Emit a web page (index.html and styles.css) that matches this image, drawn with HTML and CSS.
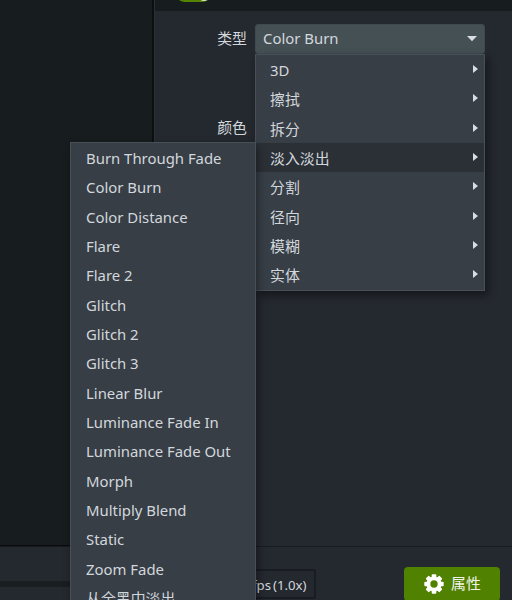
FILE: index.html
```html
<!doctype html>
<html lang="zh-CN">
  <head>
    <meta charset="utf-8">
    <meta name="viewport" content="width=device-width, initial-scale=1">
    <title>属性</title>
    <link rel="stylesheet" href="styles.css">
  </head>
  <body>
    <main class="editor">
      <section class="canvas"></section>
      <section class="panel">
        <header class="panel-header"><span class="toggle"><i></i></span></header>
        <div class="field">
          <label>类型</label>
          <div class="select">
            <span>Color Burn</span>
            <svg class="caret" width="10" height="6" viewBox="0 0 10 6"><path d="M0 0h10L5 5.2z"/></svg>
            <ul class="menu types">
              <li>3D</li>
              <li>擦拭</li>
              <li>拆分</li>
              <li class="active">淡入淡出
                <ul class="menu submenu">
                  <li>Burn Through Fade</li>
                  <li>Color Burn</li>
                  <li>Color Distance</li>
                  <li>Flare</li>
                  <li>Flare 2</li>
                  <li>Glitch</li>
                  <li>Glitch 2</li>
                  <li>Glitch 3</li>
                  <li>Linear Blur</li>
                  <li>Luminance Fade In</li>
                  <li>Luminance Fade Out</li>
                  <li>Morph</li>
                  <li>Multiply Blend</li>
                  <li>Static</li>
                  <li>Zoom Fade</li>
                  <li>从全黑中淡出</li>
                </ul>
              </li>
              <li>分割</li>
              <li>径向</li>
              <li>模糊</li>
              <li>实体</li>
            </ul>
          </div>
        </div>
        <div class="field color">
          <label>颜色</label>
        </div>
      </section>
    </main>
    <footer class="footer">
      <div class="divider"></div>
      <div class="fps">fps<span>(1.0x)</span></div>
      <button class="properties" type="button">
        <svg width="20" height="20" viewBox="-10 -10 20 20">
          <g fill="#fff">
            <rect x="-2.3" y="-9.7" width="4.6" height="19.4" rx="1"/>
            <rect x="-2.3" y="-9.7" width="4.6" height="19.4" rx="1" transform="rotate(45)"/>
            <rect x="-2.3" y="-9.7" width="4.6" height="19.4" rx="1" transform="rotate(90)"/>
            <rect x="-2.3" y="-9.7" width="4.6" height="19.4" rx="1" transform="rotate(135)"/>
            <circle r="7.6"/>
          </g>
          <circle r="3.7" fill="#508100"/>
        </svg>
        <span>属性</span>
      </button>
    </footer>
  </body>
</html>
```

FILE: styles.css
```css
* {
  box-sizing: border-box;
}

body {
  margin: 0;
  width: 512px;
  height: 600px;
  overflow: hidden;
  display: flex;
  flex-direction: column;
  background: #24282f;
  color: #d2d7dc;
  font: 14.9px/20px "Noto Sans", "Noto Sans CJK SC", sans-serif;
}

ul {
  list-style: none;
  margin: 0;
  padding: 0;
}

.editor {
  display: flex;
  height: 546px;
}

.canvas {
  width: 154px;
  background: #171c1e;
  border-right: 2px solid #0c0f10;
  border-bottom: 1px solid #080a0b;
}

.panel {
  flex: 1;
  border-left: 1px solid #2b3036;
  background: #24282f;
}

.panel-header {
  height: 11px;
  padding-left: 20px;
  background: #171c1e;
}

.toggle {
  display: flex;
  justify-content: flex-end;
  width: 37px;
  height: 20px;
  margin-top: -18px;
  border-radius: 10px;
  background: #558500;
  float: left;
}

.toggle i {
  width: 12px;
  height: 12px;
  margin: 7px 2px 0 0;
  border-radius: 50%;
  background: #dfe5d3;
}

.field {
  display: flex;
  height: 30px;
  margin-top: 13px;
}

.field label {
  width: 92px;
  margin-right: 8px;
  text-align: right;
  line-height: 29px;
}

.field.color {
  margin-top: 59px;
}

.select {
  position: relative;
  display: flex;
  align-items: center;
  justify-content: space-between;
  width: 230px;
  padding: 0 8px 0 7px;
  border: 1px solid #3f494f;
  border-radius: 3px;
  background: #455055;
}

.select > span {
  padding-bottom: 2px;
  line-height: 26px;
}

.caret {
  fill: #d8dde2;
  margin-right: -1px;
}

.menu {
  position: absolute;
  z-index: 1;
  border: 1px solid #465056;
  background: #373e46;
  box-shadow: 3px 4px 8px rgba(0, 0, 0, 0.45);
}

.menu li {
  height: 29.33px;
  padding-left: 15px;
  line-height: 30px;
  white-space: nowrap;
}

.types {
  top: 29px;
  left: -1px;
  width: 230px;
}

.types > li {
  position: relative;
  padding-left: 14px;
}

.types > li::after {
  content: "";
  position: absolute;
  top: 10px;
  right: 6px;
  border: 4.5px solid transparent;
  border-left: 5px solid #d8dde2;
  border-right: 0;
}

.types > .active {
  background: #2b3037;
}

.submenu {
  top: -1px;
  right: 228px;
  width: 186px;
  box-shadow: 2px 4px 8px rgba(0, 0, 0, 0.4);
}

.submenu li {
  line-height: 31px;
}

.footer {
  display: flex;
  height: 54px;
  border-top: 1px solid #181c20;
  background: #24282f;
}

.divider {
  width: 245px;
  height: 6px;
  margin-top: 34px;
  background: #191e20;
}

.fps {
  width: 71px;
  height: 30px;
  margin-top: 22px;
  padding-left: 5px;
  border: 2px solid #191c20;
  border-radius: 2px;
  font-size: 13.2px;
  line-height: 29px;
  white-space: nowrap;
}

.fps span {
  margin-left: 2px;
}

.properties {
  display: flex;
  align-items: center;
  gap: 7px;
  width: 96px;
  height: 34px;
  margin: 20px 0 0 88px;
  padding: 0 0 0 20px;
  border: 0;
  border-radius: 4px;
  background: #508100;
  color: #f0f4e8;
  font: inherit;
}

.properties span {
  padding-bottom: 2px;
}
```
